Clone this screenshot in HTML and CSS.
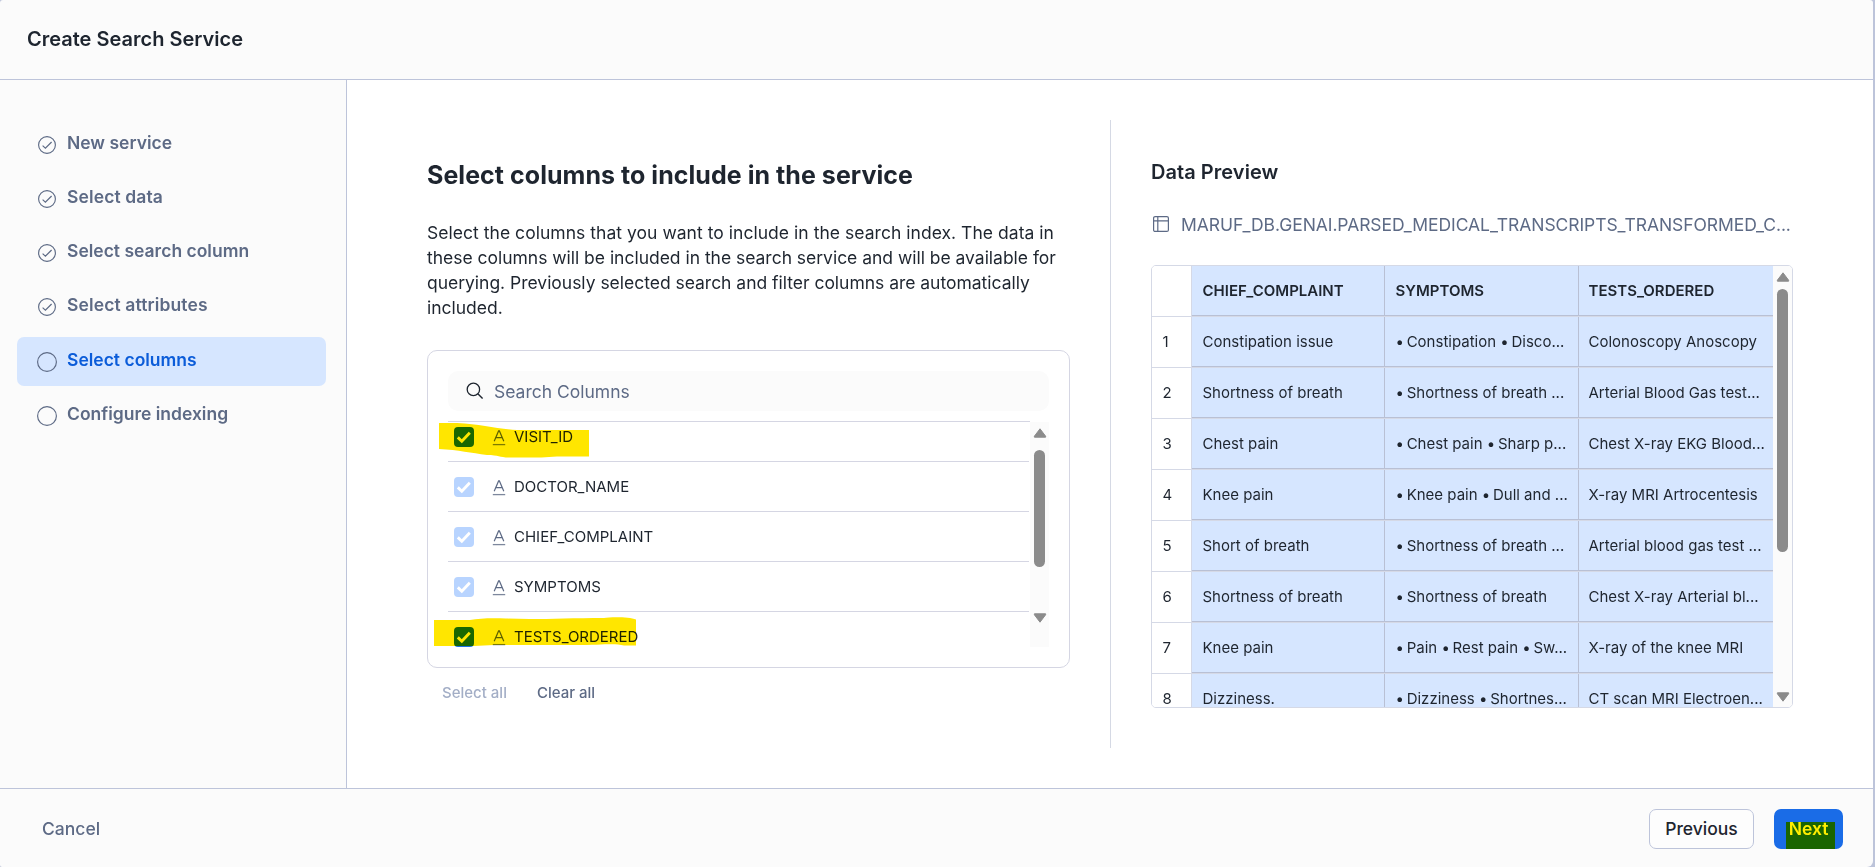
FILE: index.html
```html
<!DOCTYPE html>
<html lang="en">
<head>
<meta charset="utf-8">
<title>Create Search Service</title>
<link rel="stylesheet" href="styles.css">
</head>
<body>
<svg class="defs" width="0" height="0" aria-hidden="true">
  <symbol id="step-done" viewBox="0 0 20 20"><circle cx="10" cy="10" r="8.4" fill="none" stroke="currentColor" stroke-width="1.15"/><path d="M5.6 10.6 8.4 13.2 14.6 7" fill="none" stroke="currentColor" stroke-width="1.2"/></symbol>
  <symbol id="step-open" viewBox="0 0 20 20"><circle cx="10" cy="10" r="9.4" fill="none" stroke="currentColor" stroke-width="1.15"/></symbol>
  <symbol id="check" viewBox="0 0 20 20"><path d="M3.8 10.4 7.8 14.200 15.800 5.700" fill="none" stroke="#fff" stroke-width="2.900"/></symbol>
  <symbol id="type-text" viewBox="0 0 14 16"><path d="M2.2 11.2 6.6.9H7.4L11.8 11.2M3.8 7.6H10.2" fill="none" stroke="currentColor" stroke-width="1.2"/><path d="M.8 14.6H13.2" stroke="currentColor" stroke-width="1.3" opacity=".8"/></symbol>
  <symbol id="arrow" viewBox="0 0 14 10"><path d="M7 .8 12.6 8.2V9.2H1.4V8.2Z" fill="#8b8b8b" stroke="#8b8b8b" stroke-linejoin="round"/></symbol>
</svg>
<div class="dialog">
  <header class="header"><h1>Create Search Service</h1></header>
  <div class="body">
    <nav class="steps">
      <a class="step"><svg><use href="#step-done"/></svg><span>New service</span></a>
      <a class="step"><svg><use href="#step-done"/></svg><span class="wide">Select data</span></a>
      <a class="step"><svg><use href="#step-done"/></svg><span>Select search column</span></a>
      <a class="step"><svg><use href="#step-done"/></svg><span class="wide">Select attributes</span></a>
      <a class="step active"><svg><use href="#step-open"/></svg><span>Select columns</span></a>
      <a class="step"><svg><use href="#step-open"/></svg><span>Configure indexing</span></a>
    </nav>
    <main class="main">
      <section class="picker">
        <h2>Select columns to include in the service</h2>
        <p><span class="lead">Select the columns that you want to include in the search index. The data in</span><br>these columns will be included in the search service and will be available for<br>querying. Previously selected search and filter columns are automatically<br>included.</p>
        <div class="card">
          <div class="search">
            <svg width="18" height="18" viewBox="0 0 18 18"><circle cx="7.4" cy="7.4" r="6.2" fill="none" stroke="#1e252f" stroke-width="1.3"/><path d="M11.8 11.8 16.6 16.6" stroke="#1e252f" stroke-width="1.4"/></svg>
            <span>Search Columns</span>
          </div>
          <div class="list">
            <ul class="options">
              <li><i class="box on"><svg><use href="#check"/></svg></i><svg class="type"><use href="#type-text"/></svg><span>VISIT_ID</span></li>
              <li><i class="box"><svg><use href="#check"/></svg></i><svg class="type"><use href="#type-text"/></svg><span>DOCTOR_NAME</span></li>
              <li><i class="box"><svg><use href="#check"/></svg></i><svg class="type"><use href="#type-text"/></svg><span>CHIEF_COMPLAINT</span></li>
              <li><i class="box"><svg><use href="#check"/></svg></i><svg class="type"><use href="#type-text"/></svg><span>SYMPTOMS</span></li>
              <li><i class="box on"><svg><use href="#check"/></svg></i><svg class="type"><use href="#type-text"/></svg><span>TESTS_ORDERED</span></li>
            </ul>
            <div class="scrollbar list-bar"><svg><use href="#arrow"/></svg><b></b><svg class="down"><use href="#arrow"/></svg></div>
          </div>
          <svg class="mark mark-first" viewBox="0 0 150 35"><path d="M0 0H18C42 1 58 6 78 7H150V33.500H118C100 35 85 34.500 70 34.500C60 34.500 60 32 48 32C32 30 20 27 0 26Z"/></svg>
          <svg class="mark mark-last" viewBox="0 0 202 30"><path d="M0 3H36C46 1 60 1 72 1.500C100 3 130 1 170 1C175 0 195-.5 202 2.500V28.500H190C180 26 170 28 140 28L60 28 40 29H0Z"/></svg>
        </div>
        <div class="bulk"><span class="muted">Select all</span><span>Clear all</span></div>
      </section>
      <section class="preview">
        <h3>Data Preview</h3>
        <div class="source">
          <svg width="18" height="18" viewBox="0 0 18 18" fill="none" stroke="currentColor" stroke-width="1.2"><rect x="1.600" y="1.600" width="14.800" height="14.800" rx="1.500"/><path d="M1.600 5.800H16.400M5.800 1.600V16.400"/></svg>
          <span>MARUF_DB.GENAI.PARSED_MEDICAL_TRANSCRIPTS_TRANSFORMED_C...</span>
        </div>
        <div class="table">
          <div class="rows">
            <div class="row head"><span></span><span>CHIEF_COMPLAINT</span><span>SYMPTOMS</span><span>TESTS_ORDERED</span></div>
            <div class="row"><span>1</span><span>Constipation issue</span><span><i>•</i> Constipation <i>•</i> Disco...</span><span>Colonoscopy Anoscopy</span></div>
            <div class="row"><span>2</span><span>Shortness of breath</span><span><i>•</i> Shortness of breath ...</span><span>Arterial Blood Gas test...</span></div>
            <div class="row"><span>3</span><span>Chest pain</span><span><i>•</i> Chest pain <i>•</i> Sharp p...</span><span>Chest X-ray EKG Blood...</span></div>
            <div class="row"><span>4</span><span>Knee pain</span><span><i>•</i> Knee pain <i>•</i> Dull and ...</span><span>X-ray MRI Artrocentesis</span></div>
            <div class="row"><span>5</span><span>Short of breath</span><span><i>•</i> Shortness of breath ...</span><span>Arterial blood gas test ...</span></div>
            <div class="row"><span>6</span><span>Shortness of breath</span><span><i>•</i> Shortness of breath</span><span>Chest X-ray Arterial bl...</span></div>
            <div class="row"><span>7</span><span>Knee pain</span><span><i>•</i> Pain <i>•</i> Rest pain <i>•</i> Sw...</span><span>X-ray of the knee MRI</span></div>
            <div class="row"><span>8</span><span>Dizziness.</span><span><i>•</i> Dizziness <i>•</i> Shortnes...</span><span>CT scan MRI Electroen...</span></div>
          </div>
          <div class="scrollbar table-bar"><svg><use href="#arrow"/></svg><b></b><svg class="down"><use href="#arrow"/></svg></div>
        </div>
      </section>
    </main>
  </div>
  <footer class="footer">
    <span class="cancel">Cancel</span>
    <div class="actions">
      <button class="btn">Previous</button>
      <button class="btn primary">Next<i class="mark mark-next"></i></button>
    </div>
  </footer>
</div>
</body>
</html>
```
FILE: styles.css
```css
* { box-sizing: border-box; margin: 0; padding: 0; }
html, body { height: 100%; overflow: hidden; }
body { background: #bdc4da; font-family: Inter, "Liberation Sans", sans-serif; font-size: 17.5px; color: #1e252f; }
.defs { position: absolute; }
.dialog { width: 1873px; height: 867px; display: flex; flex-direction: column; background: #fbfbfb; border-radius: 3px 3px 6px 2px; overflow: hidden; white-space: nowrap; }
.header { height: 80px; flex: none; display: flex; align-items: center; padding: 0 0 2px 27px; border-bottom: 1px solid #bdc4da; }
.header h1 { font-size: 20px; font-weight: 600; line-height: 24px; }
.body { flex: 1; display: flex; min-height: 0; }

.steps { width: 347px; flex: none; border-right: 1px solid #bdc4da; padding: 40px 20px 0 17px; display: flex; flex-direction: column; gap: 5px; }
.step { height: 49px; border-radius: 7px; display: flex; align-items: center; gap: 10px; padding-left: 20px; font-weight: 600; color: #5d6a85; }
.step svg { width: 20px; height: 20px; flex: none; }
.step span { line-height: 22px; padding-bottom: 3px; }
.step .wide { letter-spacing: .12px; }
.step.active { background: #d6e6ff; margin-top: 1px; }
.active span { color: #0b5cd9; }

.main { flex: 1; background: #fff; display: flex; padding-top: 40px; min-width: 0; }
.picker { width: 764px; height: 628px; flex: none; border-right: 1px solid #d5d9e4; padding: 40px 40px 0 80px; }
.picker h2 { font-size: 25px; line-height: 30px; font-weight: 700; letter-spacing: .045px; }
.picker p { margin-top: 30px; line-height: 25px; letter-spacing: -.02px; }
.picker .lead { letter-spacing: .035px; }
.card { position: relative; width: 643px; height: 318px; margin-top: 30px; border: 1px solid #d5d6e3; border-radius: 10px; padding: 20px; }
.search { width: 601px; height: 40px; background: #fbfbfb; border-radius: 10px; display: flex; align-items: center; gap: 10px; padding-left: 18px; color: #5d6a85; }
.list { margin-top: 10px; width: 601px; height: 226px; display: flex; overflow: hidden; }
.options { width: 582px; list-style: none; border-top: 1px solid #d5d6e3; overflow: hidden; }
.options li { height: 50px; width: 581px; border-bottom: 1px solid #d5d6e3; display: flex; align-items: center; padding-left: 6px; font-size: 15px; }
.options li:first-child { margin-top: -10px; }
.options li:last-child { border: 0; padding-bottom: 1px; }
.box { width: 20px; height: 20px; border-radius: 4px; background: #b8d4ff; display: flex; margin-right: 18px; }
.box svg { width: 20px; height: 20px; }
.on { background: #1a72e7; }
.type { width: 14px; height: 16px; margin: 3px 8px 0 0; color: #5d6a85; }
.scrollbar { width: 19px; flex: none; background: #fbfbfb; display: flex; flex-direction: column; align-items: center; }
.scrollbar svg { width: 14px; height: 10px; flex: none; }
.scrollbar b { width: 11px; border-radius: 6px; background: #8b8b8b; }
.scrollbar .down { transform: rotate(180deg); margin-top: auto; }
.list-bar { margin-top: 1px; padding: 6px 0 24px; }
.list-bar b { height: 117px; margin-top: 12px; }
.mark { position: absolute; mix-blend-mode: multiply; fill: #ffe600; }
.mark-first { width: 150px; height: 35px; left: 11px; top: 72px; }
.mark-last { width: 202px; height: 30px; left: 6px; top: 266px; }
.bulk { display: flex; gap: 30px; margin: 16px 0 0 15px; font-size: 15px; line-height: 18px; font-weight: 500; color: #5d6a85; }
.muted { color: #a3aec6; }

.preview { padding: 40px 0 0 40px; }
.preview h3 { font-size: 20px; line-height: 24px; font-weight: 600; letter-spacing: .05px; }
.source { display: flex; align-items: center; gap: 11px; margin: 20px 0 0 1px; height: 40px; color: #5d6a85; }
.source span { letter-spacing: -.07px; }
.table { width: 642px; height: 443px; margin-top: 21px; border: 1px solid #d5d9e6; border-radius: 5px; overflow: hidden; display: flex; }
.rows { width: 621px; flex: none; }
.row { display: grid; grid-template-columns: 40px 193px 194px 194px; height: 51px; border-bottom: 1px solid #d5d9e6; font-size: 15px; line-height: 49px; }
.row span { background: #d6e6ff; border-right: 1px solid #b9c0d4; border-bottom: 1px solid #b9c0d4; padding-left: 10.500px; }
.row span:first-child { background: #fff; border-color: #d5d9e6; border-bottom: 0; }
.row span:last-child { border-right: 0; padding-left: 9.500px; }
.row i { font-style: normal; letter-spacing: -1.500px; }
.head { font-weight: 600; }
.table-bar { padding: 6px 0 5px; }
.table-bar b { height: 263px; margin-top: 7px; }

.footer { height: 79px; flex: none; border-top: 1px solid #bdc4da; display: flex; align-items: center; justify-content: space-between; padding: 1px 30px 0 42px; }
.cancel { color: #5d6a85; font-weight: 500; }
.actions { display: flex; gap: 20px; }
.btn { position: relative; width: 105px; height: 40px; border: 1px solid #bdc4da; border-radius: 7px; background: #fdfdfd; font: 500 17.5px Inter, sans-serif; color: #1e252f; }
.primary { width: 69px; border: 0; background: #1a6ce7; color: #fff; font-weight: 600; isolation: isolate; }
.mark-next { left: 12px; top: 13px; width: 49px; height: 27px; background: #ffee00; }
```
